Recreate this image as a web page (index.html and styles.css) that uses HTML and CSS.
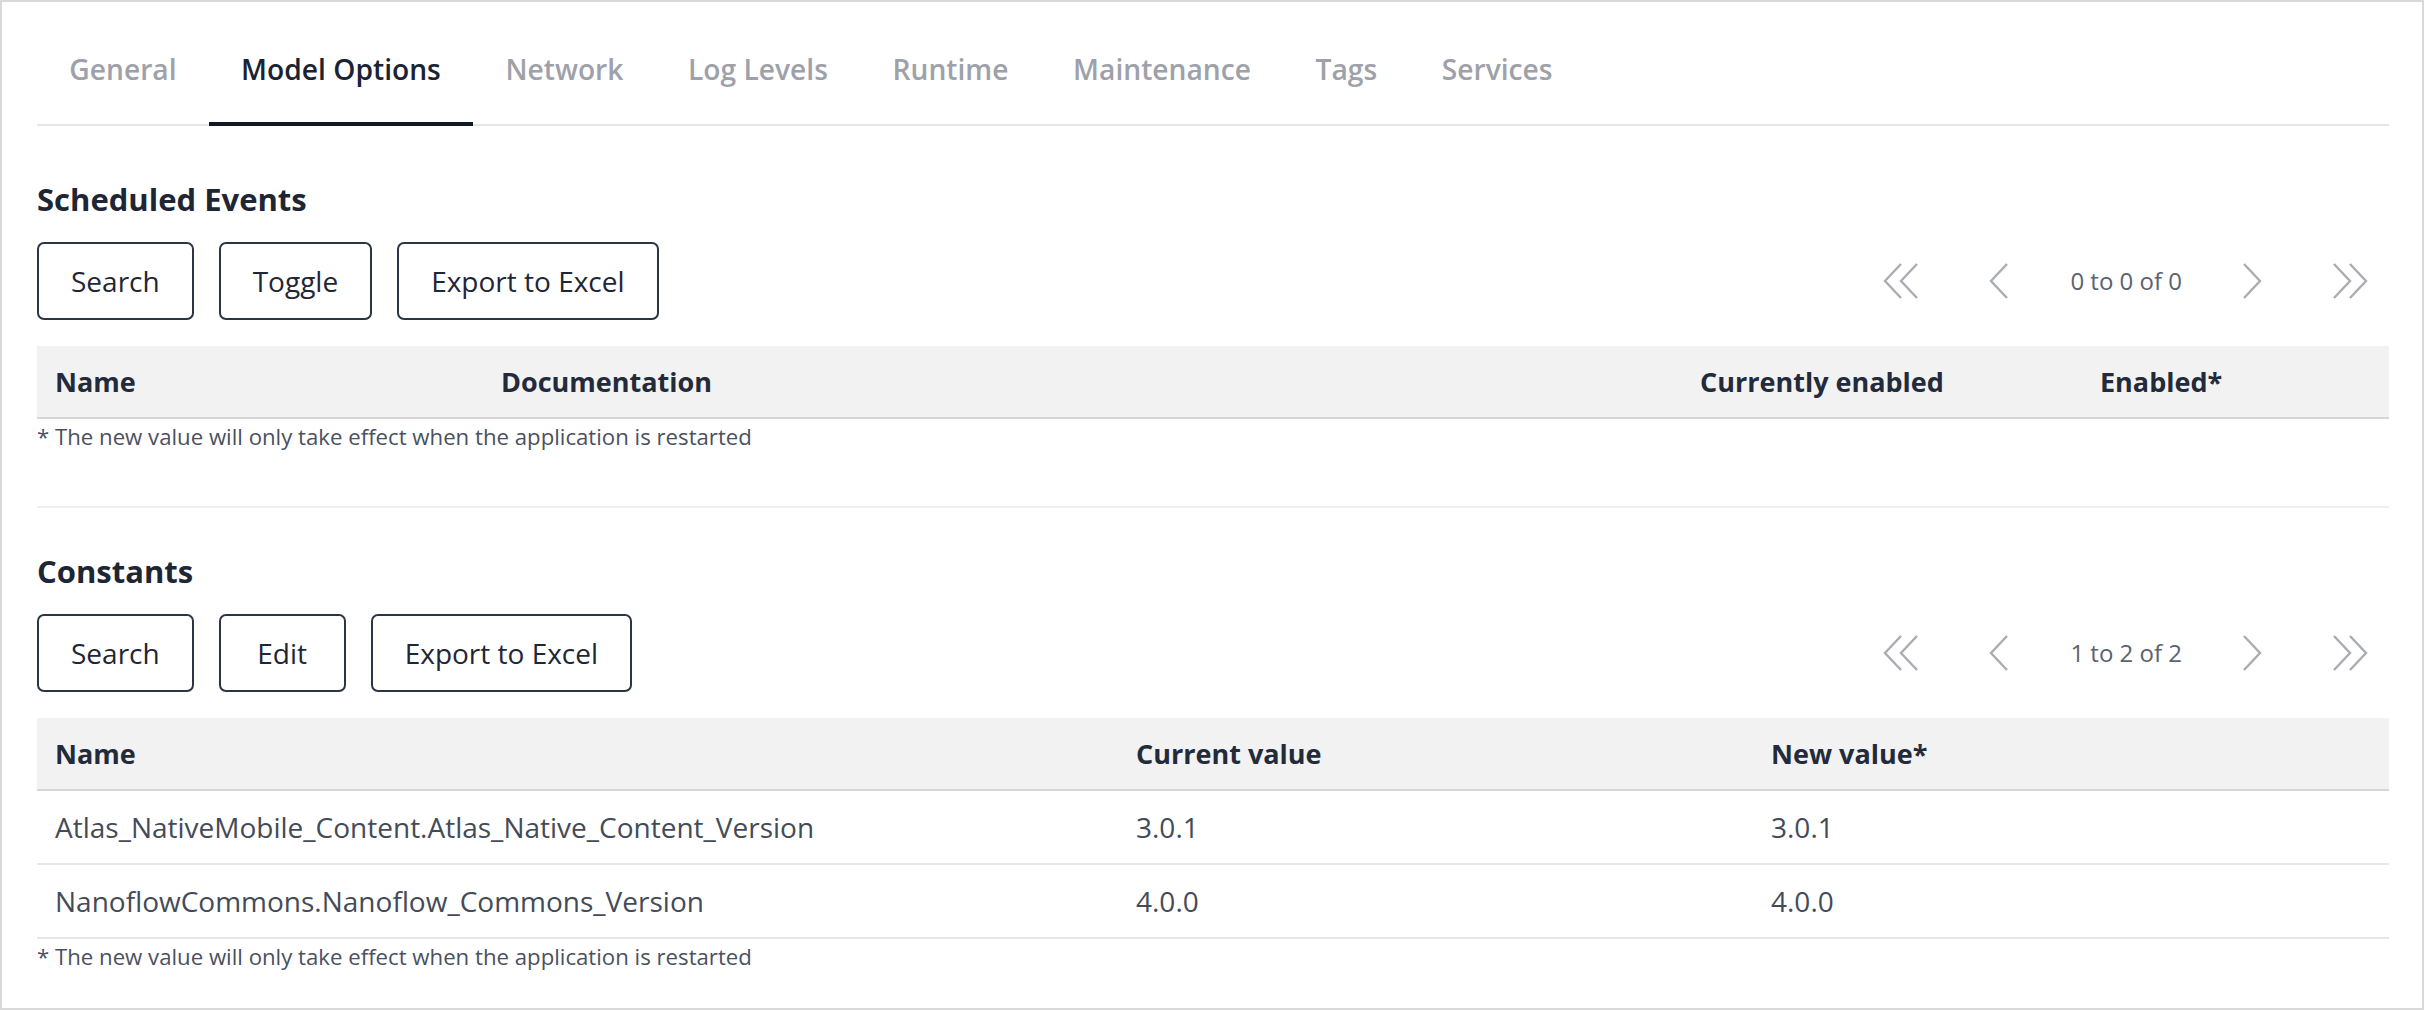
FILE: index.html
```html
<!DOCTYPE html>
<html lang="en">
<head>
<meta charset="utf-8">
<title>Model Options</title>
<link rel="stylesheet" href="styles.css">
</head>
<body>
<div class="frame">
  <nav class="tabs">
    <a class="tab">General</a>
    <a class="tab active">Model Options</a>
    <a class="tab">Network</a>
    <a class="tab">Log Levels</a>
    <a class="tab">Runtime</a>
    <a class="tab">Maintenance</a>
    <a class="tab">Tags</a>
    <a class="tab">Services</a>
  </nav>

  <section class="section first">
    <h2 class="title">Scheduled Events</h2>
    <div class="toolbar">
      <div class="btns">
        <button class="btn">Search</button>
        <button class="btn">Toggle</button>
        <button class="btn">Export to Excel</button>
      </div>
      <div class="pager">
        <span class="pg-btn"><svg width="38" height="36" viewBox="0 0 38 36"><polyline points="19,1 3,18 19,35"/><polyline points="35,1 19,18 35,35"/></svg></span>
        <span class="pg-btn"><svg width="22" height="36" viewBox="0 0 22 36"><polyline points="20,1 4,18 20,35"/></svg></span>
        <span class="pg-text">0 to 0 of 0</span>
        <span class="pg-btn"><svg width="22" height="36" viewBox="0 0 22 36"><polyline points="2,1 18,18 2,35"/></svg></span>
        <span class="pg-btn"><svg width="38" height="36" viewBox="0 0 38 36"><polyline points="3,1 19,18 3,35"/><polyline points="19,1 35,18 19,35"/></svg></span>
      </div>
    </div>
    <table class="grid">
      <colgroup><col class="c-ev1"><col class="c-ev2"><col class="c-ev3"><col class="c-ev4"></colgroup>
      <thead>
        <tr><th>Name</th><th>Documentation</th><th>Currently enabled</th><th>Enabled*</th></tr>
      </thead>
    </table>
    <p class="note">* The new value will only take effect when the application is restarted</p>
  </section>

  <hr class="sep">

  <section class="section">
    <h2 class="title">Constants</h2>
    <div class="toolbar">
      <div class="btns">
        <button class="btn">Search</button>
        <button class="btn">Edit</button>
        <button class="btn">Export to Excel</button>
      </div>
      <div class="pager">
        <span class="pg-btn"><svg width="38" height="36" viewBox="0 0 38 36"><polyline points="19,1 3,18 19,35"/><polyline points="35,1 19,18 35,35"/></svg></span>
        <span class="pg-btn"><svg width="22" height="36" viewBox="0 0 22 36"><polyline points="20,1 4,18 20,35"/></svg></span>
        <span class="pg-text">1 to 2 of 2</span>
        <span class="pg-btn"><svg width="22" height="36" viewBox="0 0 22 36"><polyline points="2,1 18,18 2,35"/></svg></span>
        <span class="pg-btn"><svg width="38" height="36" viewBox="0 0 38 36"><polyline points="3,1 19,18 3,35"/><polyline points="19,1 35,18 19,35"/></svg></span>
      </div>
    </div>
    <table class="grid">
      <colgroup><col class="c-co1"><col class="c-co2"><col class="c-co3"></colgroup>
      <thead>
        <tr><th>Name</th><th>Current value</th><th>New value*</th></tr>
      </thead>
      <tbody>
        <tr><td>Atlas_NativeMobile_Content.Atlas_Native_Content_Version</td><td>3.0.1</td><td>3.0.1</td></tr>
        <tr><td>NanoflowCommons.Nanoflow_Commons_Version</td><td>4.0.0</td><td>4.0.0</td></tr>
      </tbody>
    </table>
    <p class="note">* The new value will only take effect when the application is restarted</p>
  </section>
</div>
</body>
</html>
```
FILE: styles.css
```css
* { box-sizing: border-box; }

html, body {
  margin: 0;
  padding: 0;
  background: #ffffff;
}

body {
  font-family: "Open Sans", "Noto Sans", "Liberation Sans", sans-serif;
  color: #232a3a;
}

.frame {
  width: 2424px;
  height: 1010px;
  border: 2px solid #d9d9d9;
  padding: 0 33px 0 35px;
  overflow: hidden;
}

/* Tabs */
.tabs {
  display: flex;
  border-bottom: 2px solid #e6e6e6;
}

.tab {
  display: block;
  padding: 47px 32.3px 33px;
  font-size: 28.2px;
  line-height: 40px;
  font-weight: 600;
  color: #9ea1a9;
  border-bottom: 4px solid transparent;
  margin-bottom: -2px;
}

.tab.active {
  color: #1b2232;
  border-bottom-color: #111827;
}

/* Sections */
.section.first {
  padding-top: 51px;
}

.section {
  padding-top: 41px;
}

.title {
  margin: 0;
  font-size: 31px;
  line-height: 44px;
  font-weight: 700;
  color: #1e2535;
}

.toolbar {
  display: flex;
  align-items: center;
  justify-content: space-between;
  margin-top: 21px;
}

.btns {
  display: flex;
  gap: 25px;
}

.btn {
  min-width: 127px;
  font-family: inherit;
  font-size: 28px;
  line-height: 40px;
  font-weight: 400;
  color: #1f2636;
  background: #ffffff;
  border: 2px solid #2c3546;
  border-radius: 7px;
  padding: 17px 32px;
}

.pager {
  display: flex;
  align-items: center;
  margin-right: 7px;
}

.pg-btn {
  display: flex;
  align-items: center;
  justify-content: center;
  width: 64px;
  height: 64px;
}

.pg-btn + .pg-btn {
  margin-left: 33px;
}

.pg-btn svg {
  fill: none;
  stroke: #a9acb2;
  stroke-width: 2.4;
}

.pg-text {
  margin: 0 39px 0 40px;
  font-size: 24px;
  line-height: 32px;
  color: #5b6270;
}

/* Tables */
.grid {
  width: 100%;
  margin-top: 26px;
  border-collapse: collapse;
  table-layout: fixed;
}

.c-ev1 { width: 446px; }
.c-ev2 { width: 1199px; }
.c-ev3 { width: 400px; }
.c-ev4 { width: 307px; }

.c-co1 { width: 1081px; }
.c-co2 { width: 635px; }
.c-co3 { width: 636px; }

.grid th,
.grid td {
  padding: 0 18px;
  text-align: left;
  vertical-align: middle;
  line-height: 38px;
  white-space: nowrap;
}

.grid th {
  height: 72px;
  background: #f2f2f2;
  font-size: 27px;
  font-weight: 700;
  color: #232b3b;
  border-bottom: 2px solid #d6d6d6;
}

.grid td {
  height: 74px;
  font-size: 28px;
  font-weight: 400;
  color: #444b58;
  border-bottom: 2px solid #e6e6e6;
}

.note {
  margin: 3px 0 0;
  font-size: 22.2px;
  line-height: 30px;
  color: #4a5161;
}

.sep {
  margin: 54px 0 0;
  border: 0;
  height: 2px;
  background: #f1eef0;
}
```
